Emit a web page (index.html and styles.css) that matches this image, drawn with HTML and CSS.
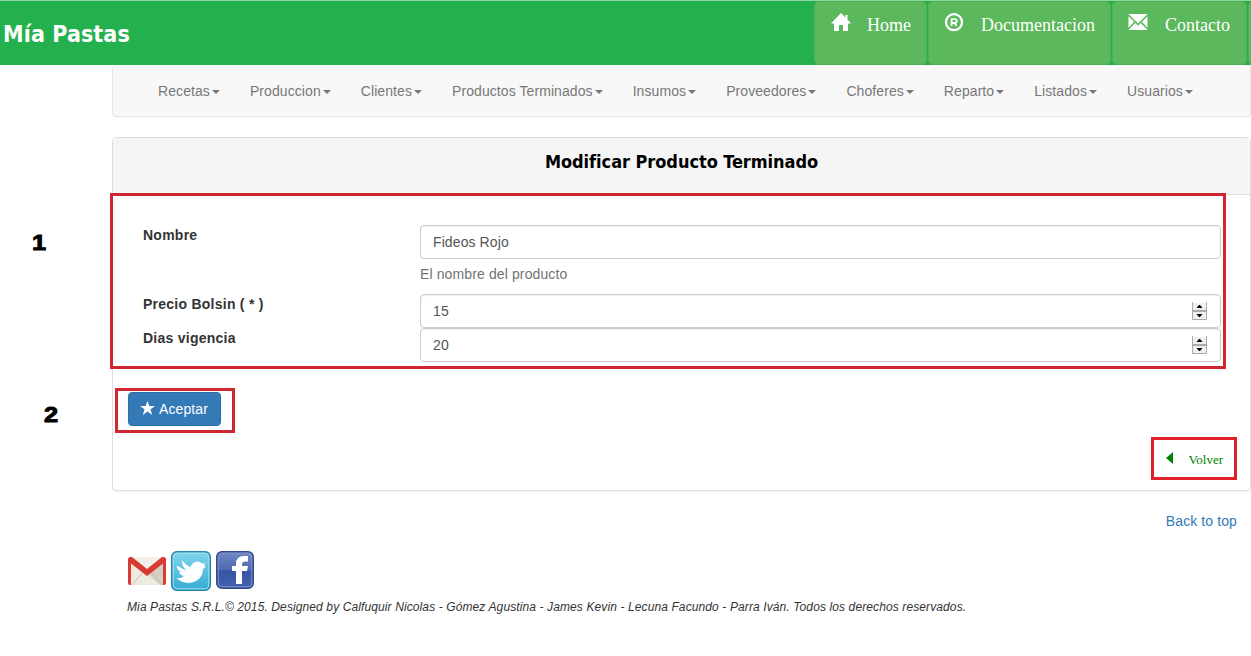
FILE: index.html
```html
<!DOCTYPE html>
<html lang="es">
<head>
<meta charset="utf-8">
<title>Mía Pastas</title>
<link rel="stylesheet" href="styles.css">
</head>
<body>
<header class="topbar">
  <h1 class="brand">Mía Pastas</h1>
  <div class="top-links">
    <a class="top-btn home"><svg width="20" height="19" viewBox="0 0 20 19"><path fill="#fff" d="M10 0 0 10.500h3V18h5v-6h4v6h5v-7.500h3L16.500 6.600V2h-2v2.500z"/></svg><span>Home</span></a>
    <a class="top-btn docs"><svg width="20" height="19" viewBox="0 0 20 19"><circle cx="10" cy="9.200" r="8" fill="none" stroke="#fff" stroke-width="2.200"/><path fill="none" stroke="#fff" stroke-width="1.800" d="M7.600 13V6.200h3.200a1.800 1.800 0 0 1 0 3.800H7.600M10.500 10l2 3"/></svg><span>Documentacion</span></a>
    <a class="top-btn mail"><svg width="20" height="19" viewBox="0 0 20 19"><path fill="#fff" d="M.500 1h19L10 10.500zM.500 3.200l5.600 5.500L.500 15zM19.500 3.200l-5.600 5.500 5.600 6.300zM7.200 9.900 10 12.700l2.800-2.800 6.700 7.100H.500z"/></svg><span>Contacto</span></a>
    <a class="top-btn rest"></a>
  </div>
</header>
<div class="container">
  <nav class="menu">
    <a>Recetas<b class="caret"></b></a><a>Produccion<b class="caret"></b></a><a>Clientes<b class="caret"></b></a><a>Productos Terminados<b class="caret"></b></a><a>Insumos<b class="caret"></b></a><a>Proveedores<b class="caret"></b></a><a>Choferes<b class="caret"></b></a><a>Reparto<b class="caret"></b></a><a>Listados<b class="caret"></b></a><a>Usuarios<b class="caret"></b></a>
  </nav>
  <main class="panel">
    <h2 class="panel-heading">Modificar Producto Terminado</h2>
    <form class="form">
      <div class="row"><label>Nombre</label><div class="field"><div class="control">Fideos Rojo</div><p class="help">El nombre del producto</p></div></div>
      <div class="row"><label>Precio Bolsin ( * )</label><div class="field"><div class="control">15<svg class="spin" width="16" height="18" viewBox="0 0 16 18"><path fill="#efefef" d="M1 1h14v16H1z"/><path fill="none" stroke="#aaa" d="M.500 0v17.500h14V0M0 8.500h15M0 9.500h15"/><path d="M4.500 6h6L8 3H7zM4.500 12h6L8 15H7z"/></svg></div></div></div>
      <div class="row"><label>Dias vigencia</label><div class="field"><div class="control">20<svg class="spin" width="16" height="18" viewBox="0 0 16 18"><path fill="#efefef" d="M1 1h14v16H1z"/><path fill="none" stroke="#aaa" d="M.500 0v17.500h14V0M0 8.500h15M0 9.500h15"/><path d="M4.500 6h6L8 3H7zM4.500 12h6L8 15H7z"/></svg></div></div></div>
      <a class="accept"><svg width="15" height="14" viewBox="0 0 15 14"><path fill="#fff" d="m7.500 0 1.900 5H15l-4.500 3.300L12.200 14l-4.700-3.500L2.800 14l1.700-5.700L0 5h5.600z"/></svg>Aceptar</a>
    </form>
    <a class="back"><svg width="7" height="12" viewBox="0 0 7 12"><path fill="#008000" d="M7 0v12L0 6z"/></svg>Volver</a>
  </main>
  <footer class="footer">
    <a class="to-top">Back to top</a>
    <div class="social">
      <svg width="40" height="40" viewBox="0 0 40 40"><path fill="#eeeae0" d="M3 6h34v28H3z"/><path fill="#d4cec3" d="M37 10v24H33L20 22z"/><path fill="none" stroke="#c7c0b4" d="m5 34 11-13M35 34 24 21"/><path fill="#f3f0ea" d="M5 6h30L20 18z"/><path fill="#d93a32" d="M1 8.500Q1 6 3.500 6H5l15 12L35 6h1.500Q39 6 39 8.500V32q0 2-2 2h-1V12.500L20 25 4 12.500V34H3q-2 0-2-2z"/></svg>
      <svg class="tw" width="40" height="40" viewBox="0 0 40 40"><defs><linearGradient id="t" x2="0" y2="1"><stop stop-color="#83d5ed"/><stop offset="1" stop-color="#35acd3"/></linearGradient></defs><rect x=".8" y=".8" width="38.400" height="38.400" rx="5" fill="url(#t)" stroke="#2687a9" stroke-width="1.600"/><rect x="2.200" y="2.200" width="35.600" height="35.600" rx="4" fill="none" stroke="#a4e1f2"/><path fill="#fff" d="M5 27q5 1 8-2-4-1-5-4h2.500Q6 19 5.500 15l2.500.5Q12 19 19 20q0-7 5-9 4-1.500 7 1.500h3.500L33 15l2 .5-3 2.500q0 8-7 12-10 5-20-3z"/><path fill="#fff" d="M20 22q-9-3-9-13 3 5 11 8z"/></svg>
      <svg class="fb" width="38" height="38" viewBox="0 0 38 38"><defs><linearGradient id="f" x2="0" y2="1"><stop stop-color="#7188c4"/><stop offset=".5" stop-color="#4e69b2"/><stop offset=".52" stop-color="#3754a2"/><stop offset="1" stop-color="#4562ad"/></linearGradient></defs><rect x=".8" y=".8" width="36.400" height="36.400" rx="5" fill="url(#f)" stroke="#304b8d" stroke-width="1.600"/><rect x="2.200" y="2.200" width="33.600" height="33.600" rx="4" fill="none" stroke="#8195ca"/><path fill="#fff" d="M20 33V20h-4v-5h4v-2q0-8 8-8h4v5.500h-3q-3 0-3 3V15h6l-1 5h-5v13z"/></svg>
    </div>
    <p class="legal">Mia Pastas S.R.L.© 2015. Designed by Calfuquir Nicolas - Gómez Agustina - James Kevin - Lecuna Facundo - Parra Iván. Todos los derechos reservados.</p>
  </footer>
</div>
<div class="mark mark-form"></div>
<div class="mark mark-accept"></div>
<div class="mark mark-back"></div>
<span class="num num-one">1</span>
<span class="num num-two">2</span>
</body>
</html>
```
FILE: styles.css
```css
* { box-sizing: border-box; }
body { margin: 0; width: 1251px; height: 656px; overflow: hidden; position: relative; background: #fff; color: #333; font: 14px/20px "Liberation Sans", Arial, sans-serif; }
h1, h2, p { margin: 0; }
svg { flex: none; display: block; }
.topbar { height: 65px; display: flex; justify-content: space-between; background: #24b14d; border-top: 1px solid #8fd5a2; }
.brand { padding: 16px 0 0 3px; color: #fff; font: bold 23px/34px "DejaVu Sans Condensed", "DejaVu Sans", sans-serif; font-stretch: condensed; letter-spacing: .1px; white-space: nowrap; }
.top-links { display: flex; gap: 1px; width: 437px; overflow: hidden; }
.top-btn { flex: none; height: 64px; display: flex; gap: 16px; padding: 11px 0 0 16px; background: #5cb85c; border: 1px solid #4fb156; border-radius: 5px; color: #fff; font: 18px/25px "Liberation Serif", serif; }
.home { width: 113px; }
.docs { width: 183px; padding-left: 15px; gap: 17px; }
.mail { width: 135px; padding-left: 15px; gap: 17px; }
.rest { width: 30px; }
.container { margin-left: 112px; }
.menu { height: 52px; display: flex; padding: 16px 0 0 45px; gap: 30px; background: #f8f8f8; border: 1px solid #e5e5e5; border-top: 0; border-radius: 4px; color: #777; letter-spacing: .08px; }
.menu a { display: flex; white-space: nowrap; }
.caret { margin: 9px 0 0 2px; width: 8px; height: 4px; border: 4px solid transparent; border-top-color: #777; border-bottom: 0; }
.panel { margin-top: 20px; height: 354px; border: 1px solid #ddd; border-radius: 4px; box-shadow: 0 1px 1px rgba(0,0,0,.05); display: flex; flex-direction: column; }
.panel-heading { flex: none; height: 57px; background: #f5f5f5; border-bottom: 1px solid #ddd; color: #000; text-align: center; font: bold 18px/24px "DejaVu Sans Condensed", "DejaVu Sans", sans-serif; font-stretch: condensed; letter-spacing: -.05px; padding-top: 12px; }
.form { padding: 30px 30px 0; }
.row { display: flex; }
.row label { flex: none; width: 277px; font-weight: bold; letter-spacing: .25px; }
.field { flex: none; width: 801px; }
.control { height: 34px; display: flex; justify-content: space-between; padding: 6px 12px; border: 1px solid #ccc; border-radius: 4px; box-shadow: inset 0 1px 1px rgba(0,0,0,.075); color: #555; letter-spacing: .1px; }
.spin { margin-top: 1px; }
.help { padding: 5px 0 10px; color: #737373; letter-spacing: .12px; }
.accept { width: 93px; height: 34px; margin: 30px 0 0 -15px; display: flex; gap: 4px; padding: 6px 11px; background: #337ab7; border: 1px solid #2e6da4; border-radius: 4px; color: #fff; letter-spacing: .1px; }
.accept svg { margin-top: 2px; }
.back { align-self: flex-end; display: flex; gap: 16px; margin: 24px 27px 0 0; color: green; font: 13px/20px "Liberation Serif", serif; }
.back svg { margin-top: 2px; }
.footer { padding: 20px 14px 0 15px; }
.to-top { display: block; text-align: right; color: #337ab7; letter-spacing: .1px; }
.social { display: flex; height: 46px; margin-top: 20px; }
.tw { margin-left: 4px; }
.fb { margin: 0 0 0 5px; }
.legal { font: italic 12px/20px "Liberation Sans", Arial, sans-serif; letter-spacing: .11px; white-space: nowrap; }
.mark { position: absolute; border: 3px solid #cf2732; }
.mark-form { left: 110px; top: 193px; width: 1116px; height: 176px; }
.mark-accept { left: 115px; top: 388px; width: 120px; height: 45px; }
.mark-back { left: 1151px; top: 437px; width: 86px; height: 43px; border-color: #df2029; }
.num { position: absolute; color: #000; font: 900 22px/26px "Liberation Sans", Arial, sans-serif; -webkit-text-stroke: 1px #000; transform: scaleX(1.15); }
.num-one { left: 33px; top: 230px; }
.num-two { left: 45px; top: 402px; }
```
